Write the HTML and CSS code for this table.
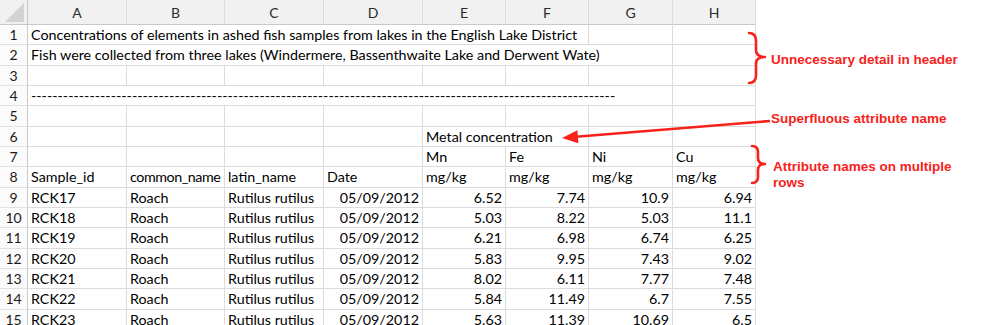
FILE: index.html
```html
<!DOCTYPE html>
<html>
<head>
<meta charset="utf-8">
<link rel="stylesheet" href="styles.css">
</head>
<body>
<div class="page">
  <div class="sheet">
    <div class="corner"><span class="tri"></span></div>
    <div class="ch">A</div><div class="ch">B</div><div class="ch">C</div><div class="ch">D</div>
    <div class="ch">E</div><div class="ch">F</div><div class="ch">G</div><div class="ch">H</div>

    <div class="rh">1</div>
    <div class="c span6">Concentrations of elements in ashed fish samples from lakes in the English Lake District</div>
    <div class="c"></div><div class="c"></div>

    <div class="rh">2</div>
    <div class="c span7">Fish were collected from three lakes (Windermere, Bassenthwaite Lake and Derwent Wate)</div>
    <div class="c"></div>

    <div class="rh">3</div>
    <div class="c"></div><div class="c"></div><div class="c"></div><div class="c"></div>
    <div class="c"></div><div class="c"></div><div class="c"></div><div class="c"></div>

    <div class="rh">4</div>
    <div class="c span7">--------------------------------------------------------------------------------------------------------------</div>
    <div class="c"></div>

    <div class="rh">5</div>
    <div class="c"></div><div class="c"></div><div class="c"></div><div class="c"></div>
    <div class="c"></div><div class="c"></div><div class="c"></div><div class="c"></div>

    <div class="rh">6</div>
    <div class="c"></div><div class="c"></div><div class="c"></div><div class="c"></div>
    <div class="c span2">Metal concentration</div><div class="c"></div><div class="c"></div>

    <div class="rh">7</div>
    <div class="c"></div><div class="c"></div><div class="c"></div><div class="c"></div>
    <div class="c">Mn</div><div class="c">Fe</div><div class="c">Ni</div><div class="c">Cu</div>

    <div class="rh">8</div>
    <div class="c">Sample_id</div><div class="c tight">common_name</div><div class="c">latin_name</div><div class="c">Date</div>
    <div class="c">mg/kg</div><div class="c">mg/kg</div><div class="c">mg/kg</div><div class="c">mg/kg</div>

    <div class="rh">9</div>
    <div class="c">RCK17</div><div class="c">Roach</div><div class="c">Rutilus rutilus</div><div class="c num">05/09/2012</div>
    <div class="c num">6.52</div><div class="c num">7.74</div><div class="c num">10.9</div><div class="c num">6.94</div>

    <div class="rh">10</div>
    <div class="c">RCK18</div><div class="c">Roach</div><div class="c">Rutilus rutilus</div><div class="c num">05/09/2012</div>
    <div class="c num">5.03</div><div class="c num">8.22</div><div class="c num">5.03</div><div class="c num">11.1</div>

    <div class="rh">11</div>
    <div class="c">RCK19</div><div class="c">Roach</div><div class="c">Rutilus rutilus</div><div class="c num">05/09/2012</div>
    <div class="c num">6.21</div><div class="c num">6.98</div><div class="c num">6.74</div><div class="c num">6.25</div>

    <div class="rh">12</div>
    <div class="c">RCK20</div><div class="c">Roach</div><div class="c">Rutilus rutilus</div><div class="c num">05/09/2012</div>
    <div class="c num">5.83</div><div class="c num">9.95</div><div class="c num">7.43</div><div class="c num">9.02</div>

    <div class="rh">13</div>
    <div class="c">RCK21</div><div class="c">Roach</div><div class="c">Rutilus rutilus</div><div class="c num">05/09/2012</div>
    <div class="c num">8.02</div><div class="c num">6.11</div><div class="c num">7.77</div><div class="c num">7.48</div>

    <div class="rh">14</div>
    <div class="c">RCK22</div><div class="c">Roach</div><div class="c">Rutilus rutilus</div><div class="c num">05/09/2012</div>
    <div class="c num">5.84</div><div class="c num">11.49</div><div class="c num">6.7</div><div class="c num">7.55</div>

    <div class="rh">15</div>
    <div class="c">RCK23</div><div class="c">Roach</div><div class="c">Rutilus rutilus</div><div class="c num">05/09/2012</div>
    <div class="c num">5.63</div><div class="c num">11.39</div><div class="c num">10.69</div><div class="c num">6.5</div>
  </div>

  <svg class="marks" width="983" height="325" viewBox="0 0 983 325">
    <path class="brace" d="M749,33 Q756,33 756,41 L756,50 Q756,57 765,57 Q756,57 756,64 L756,75 Q756,83 749,83"/>
    <path class="brace" d="M752,146 Q758,146 758,152 L758,158 Q758,164 765,164 Q758,164 758,170 L758,177 Q758,183 752,183"/>
    <line class="arrow-line" x1="770" y1="121" x2="576" y2="136.8"/>
    <polygon class="arrow-head" points="562,138 578.4,143.2 577.4,130.2"/>
  </svg>

  <div class="note note-header">Unnecessary detail in header</div>
  <div class="note note-attr">Superfluous attribute name</div>
  <div class="note note-rows">Attribute names on multiple<br>rows</div>
</div>
</body>
</html>
```

FILE: styles.css
```css
html, body {
  margin: 0;
  padding: 0;
  background: #ffffff;
  overflow: hidden;
}

.page {
  position: relative;
  width: 983px;
  height: 325px;
  overflow: hidden;
}

.sheet {
  display: grid;
  grid-template-columns: 28px 99px 98px 99px 99px 83px 83px 84px 83px;
  grid-template-rows: 25px repeat(15, 20.33px);
  width: 756px;
  font-family: Lato, "Liberation Sans", sans-serif;
  font-size: 14.3px;
  color: #000;
}

.corner {
  position: relative;
  background: #f0f0f0;
  border-right: 1px solid #c9c9c9;
  border-bottom: 1px solid #c9c9c9;
}

.tri {
  position: absolute;
  right: 3px;
  bottom: 2px;
  width: 0;
  height: 0;
  border-left: 19px solid transparent;
  border-bottom: 19px solid #d2d2d2;
}

.ch {
  display: flex;
  align-items: center;
  justify-content: center;
  background: #f1f1f1;
  border-right: 1px solid #dcdcdc;
  border-bottom: 1px solid #c9c9c9;
  color: #2b2b2b;
  font-size: 14px;
  box-sizing: border-box;
}

.rh {
  display: flex;
  align-items: center;
  justify-content: center;
  background: #fbfbfb;
  border-right: 1px solid #c9c9c9;
  border-bottom: 1px solid #e2e2e2;
  color: #1a1a1a;
  font-size: 14px;
  box-sizing: border-box;
}

.c {
  display: flex;
  align-items: center;
  padding: 0 3px;
  border-right: 1px solid #dcdcdc;
  border-bottom: 1px solid #dcdcdc;
  white-space: nowrap;
  overflow: hidden;
  box-sizing: border-box;
  min-width: 0;
}

.tight {
  letter-spacing: -0.45px;
  padding-right: 0;
}

.num {
  justify-content: flex-end;
}

.span2 { grid-column: span 2; }
.span6 { grid-column: span 6; }
.span7 { grid-column: span 7; }

.marks {
  position: absolute;
  left: 0;
  top: 0;
  pointer-events: none;
}

.brace {
  fill: none;
  stroke: #f6221b;
  stroke-width: 2.6;
  stroke-linecap: round;
  stroke-linejoin: round;
}

.arrow-line {
  stroke: #f6221b;
  stroke-width: 2.6;
}

.arrow-head {
  fill: #f6221b;
}

.note {
  position: absolute;
  left: 771px;
  font-family: "Liberation Sans", Arial, sans-serif;
  font-weight: bold;
  font-size: 13.5px;
  line-height: 16px;
  color: #f6221b;
  white-space: nowrap;
}

.note-header { top: 52px; }
.note-attr { top: 111px; }
.note-rows { top: 159px; left: 773px; }
```
